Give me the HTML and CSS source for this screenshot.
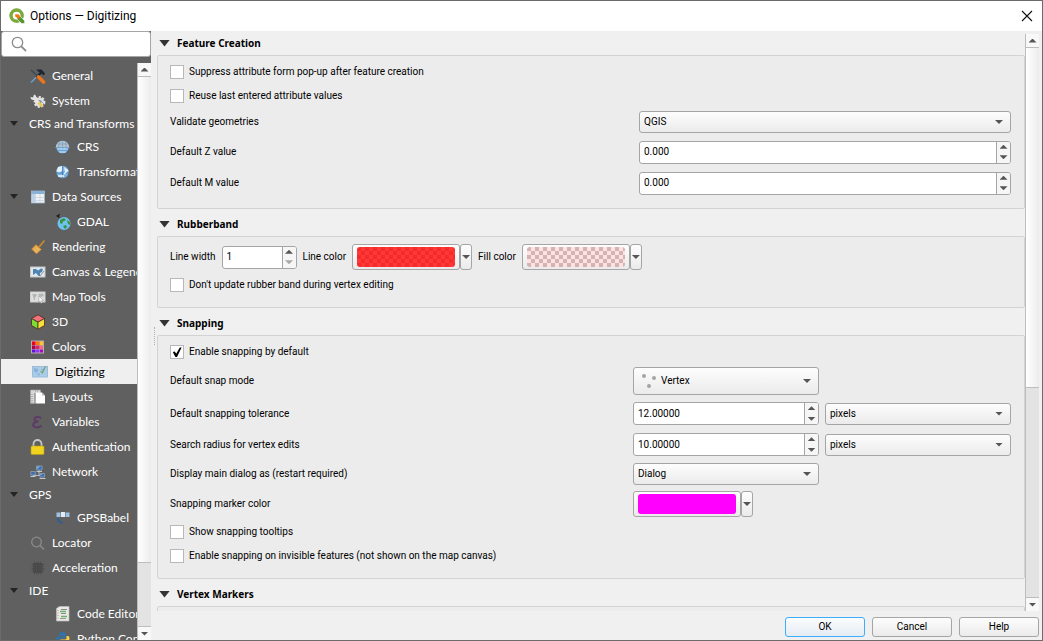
FILE: index.html
```html
<!DOCTYPE html>
<html lang="en">
<head>
<meta charset="utf-8">
<title>Options — Digitizing</title>
<link rel="stylesheet" href="styles.css">
</head>
<body>
<div class="window">
  <header class="titlebar">
    <svg class="icon" viewBox="0 0 16 16"><circle cx="7.6" cy="7.6" r="5.6" fill="none" stroke="#7aa93c" stroke-width="3.4"/><path d="M8 8h3l4.6 4.8v2.8h-3L8 11z" fill="#589632" stroke="#fff" stroke-width=".6"/><path d="M6.2 6.2h3.2l1.4 1.6v2.8H9L6.2 8.6z" fill="#ee7913"/></svg>
    <h1 class="title">Options — Digitizing</h1>
    <button class="close" aria-label="Close"><svg viewBox="0 0 12 12" width="12" height="12"><path d="M1 1l10 10M11 1L1 11" stroke="#111" stroke-width="1.1"/></svg></button>
  </header>
  <div class="body">
    <aside class="sidebar">
      <label class="search">
        <svg class="icon" viewBox="0 0 16 16" fill="none" stroke="#8c8c8c"><circle cx="6.5" cy="6.5" r="5.2" stroke-width="1.3"/><path d="M10.3 10.3L15 15" stroke-width="1.8"/></svg>
        <input type="text" aria-label="Search options">
      </label>
      <div class="tree-wrap">
        <nav class="tree">
          <button class="item"><svg class="icon" viewBox="0 0 16 16"><path d="M1 14.500l7-7" stroke="#6f9bc4" stroke-width="1.600"/><path d="M6.500 9.500l5-5.500" stroke="#1c2733" stroke-width="2.400"/><path d="M6.500 1.500h5l3.500 4-1.500 2-3-3-2.500-1z" fill="#1c2733"/><path d="M1 2l7 6.500" stroke="#3b4a5a" stroke-width="1.600"/><path d="M8.500 9l5 5" stroke="#f0741c" stroke-width="3.600" stroke-linecap="round"/></svg><span>General</span></button>
          <button class="item"><svg class="icon" viewBox="0 0 16 16"><circle cx="9.500" cy="9" r="4.600" fill="#ddd" stroke="#e2e2e2" stroke-width="2.600" stroke-dasharray="2 1.400"/><circle cx="9.500" cy="9" r="2" fill="#8a8a8a"/><path d="M.5 4l2.500.5L4 1.500c2 .5 2.500 2 2 3.500l4 4-2 2-4-4C2 7.500.5 6 .5 4z" fill="#e4e4e4"/><path d="M8.500 9.500l4 4" stroke="#ecc95a" stroke-width="2.600"/><path d="M10 7l4 4" stroke="#8bb0d6"/></svg><span>System</span></button>
          <button class="item plain"><i class="tri"></i><span>CRS and Transforms</span></button>
          <button class="item child"><svg class="icon" viewBox="0 0 16 16"><circle cx="7.500" cy="8" r="6.300" fill="#73b4ec"/><path d="M.8 8.500a6.700 6.700 0 0 1 13.400 0z" fill="#b4c2cc"/><path d="M0 8.500h15M2 5h11M2 11.500h11M7.500 1.500v13M4.700 2.200q-2 5.800 0 11.600M10.300 2.200q2 5.800 0 11.600" fill="none" stroke="#6e95bb" stroke-width=".6"/><path d="M2.500 10h10M4 13h7" stroke="#c7e4fc"/></svg><span>CRS</span></button>
          <button class="item child"><svg class="icon" viewBox="0 0 16 16"><circle cx="7.500" cy="8" r="6.200" fill="#78b4ea"/><path d="M3 3l4-1 1 4-4 3-2.500-2zM9 3l4 3-3 2z" fill="#e4f1fb"/><path d="M1 9h13M7.500 2v12" stroke="#4b76a5" stroke-width=".8"/><path d="M3 12h6M9 10l4-4" stroke="#eaf5ff" stroke-width="1.300"/></svg><span>Transformations</span></button>
          <button class="item"><i class="tri"></i><svg class="icon" viewBox="0 0 16 16"><rect x="1.500" y="2" width="13" height="12" fill="#eef2f5" stroke="#9fb4c7" stroke-width=".8"/><path d="M1.500 2h13v3h-13z" fill="#8ab2d8"/><path d="M5.500 5v9M10 5v9M1.500 8.500h13M1.500 11.500h13" stroke="#c6d2dc" stroke-width=".8"/><path d="M1.500 5h3.500v9H1.500z" fill="#bcd2e6"/></svg><span>Data Sources</span></button>
          <button class="item child"><svg class="icon" viewBox="0 0 16 16"><circle cx="9" cy="9.500" r="6.500" fill="#6cc3f0"/><path d="M5 6l4-2 2 2-3 1.500-1 2.500-2-1zM12 6l3 2v3l-2-1zM8 12l3-1 1 2-2 2z" fill="#3f8f3d"/><path d="M1.500 1.500l3 2M4.500 0L3 2.500" stroke="#17191b" stroke-width="1.300"/></svg><span>GDAL</span></button>
          <button class="item"><svg class="icon" viewBox="0 0 16 16"><path d="M9 8l5.500-6.500" stroke="#c98931" stroke-width="1.800"/><path d="M6 5.500l5.500 5-5 4.500L1.500 10z" fill="#e6ab50" stroke="#a8702a" stroke-width=".6"/><path d="M4 10.500l3 2.500M6 8.500l3 2.500" stroke="#f4cb83" stroke-width=".8"/></svg><span>Rendering</span></button>
          <button class="item"><svg class="icon" viewBox="0 0 16 16"><rect x=".5" y="3" width="14.500" height="10" fill="#e3e8ec" stroke="#c3c7cb"/><path d="M3 5l3 0 2 1.500 3-2 2 .5-1 3-2 1 0 3H8.500L6 9 3 11z" fill="#4f83b3"/><path d="M10 12l4-5" stroke="#8b959d"/></svg><span>Canvas &amp; Legend</span></button>
          <button class="item"><svg class="icon" viewBox="0 0 16 16"><rect x=".5" y="3" width="14.500" height="10" fill="#dedede" stroke="#cfcfcf"/><path d="M2 5l4 0 1 1.500-2 2 0 2.500-1 0-1-4zM8 5l5-.5 1 2.500-3 1-2-1z" fill="#b3b6b8"/><path d="M9 7l4.500 4.500-2 .3.800 2-1.300.5-.8-2-1.500 1z" fill="#f7f7f7" stroke="#8b8b8b" stroke-width=".5"/></svg><span>Map Tools</span></button>
          <button class="item"><svg class="icon" viewBox="0 0 16 16" stroke="#4a2b20" stroke-width=".8"><path d="M8 .8l6.500 3.700-6.500 3.700-6.500-3.700z" fill="#f2727a"/><path d="M1.500 4.500l6.500 3.700v7l-6.500-3.700z" fill="#7fdc32"/><path d="M14.500 4.500l-6.500 3.700v7l6.500-3.700z" fill="#f7df3c"/></svg><span>3D</span></button>
          <button class="item"><svg class="icon" viewBox="0 0 16 16"><path d="M1 1.500h13v13H1z" fill="#b9a9b1"/><path d="M2 2.500h3.500v3.500H2z" fill="#f00018"/><path d="M6 2.500h3.500v3.500H6z" fill="#fb7a10"/><path d="M10 2.500h3v3.500h-3z" fill="#fec818"/><path d="M2 6.500h3.500v3.500H2z" fill="#b00048"/><path d="M6 6.500h3.500v3.500H6z" fill="#e0226c"/><path d="M10 6.500h3v3.500h-3z" fill="#f46a80"/><path d="M2 10.500h3.500v3H2z" fill="#6412e0"/><path d="M6 10.500h3.500v3H6z" fill="#8f36f4"/><path d="M10 10.500h3v3h-3z" fill="#a808c0"/></svg><span>Colors</span></button>
          <button class="item selected" aria-current="page"><svg class="icon" viewBox="0 0 16 16"><rect x=".5" y="2.500" width="15" height="10.500" fill="#a9cce8" stroke="#9bbdda"/><path d="M2 4l4 1 0 2-2 2-2-2zM5 9l3 1-1 2zM9 5l3 0-1 3zM11 10l3 1" fill="#86b2d6"/><path d="M8 7l2.500 3L14.500 1.500l-2.500 2L10.500 7.500z" fill="#7ba368"/></svg><span>Digitizing</span></button>
          <button class="item"><svg class="icon" viewBox="0 0 16 16"><path d="M.5 1h10v3H4.500v10.500H.5z" fill="#d8d8d8" stroke="#a5a5a5" stroke-width=".6"/><path d="M2 5v9M5 2h4" stroke="#777" stroke-width=".7" stroke-dasharray="1"/><path d="M5.500 3.500h6.500l3 3v8H5.500z" fill="#fff"/><path d="M12 3.500v3h3z" fill="#bdbdbd"/></svg><span>Layouts</span></button>
          <button class="item"><svg class="icon" viewBox="0 0 16 16"><path d="M11 4.500Q9 2 6 3.200C3.300 4.500 4.500 7.500 8.500 7.500C3.500 7.500 2 11 4.500 12.800Q8 14.500 11.500 11.500" fill="none" stroke="#5f3a66" stroke-width="2"/></svg><span>Variables</span></button>
          <button class="item"><svg class="icon" viewBox="0 0 16 16"><path d="M3.500 8V5a4 4 0 0 1 8 0V8" fill="none" stroke="#c4c4c4" stroke-width="1.800"/><rect x="1" y="7" width="13" height="8.500" rx="1" fill="#f0d31e" stroke="#b89c10" stroke-width=".6"/></svg><span>Authentication</span></button>
          <button class="item"><svg class="icon" viewBox="0 0 16 16"><path d="M3 9v2.500h8M9 6v5.500" stroke="#b7bcc1" fill="none"/><path d="M6.500 2H12v4H6.500zM.8 7.500H5.300v3.500H.8zM10 9.500h4.500v3.500H10z" fill="#3a6fae" stroke="#93abc2" stroke-width=".7"/><path d="M7 2.500h3l-2.500 2.500zM10.500 10h2l-2 1.500z" fill="#8ab5e2"/><path d="M6.500 7.500h5.500M.5 12.500h5M9.500 14.500h6" stroke="#c5c8ca"/></svg><span>Network</span></button>
          <button class="item plain"><i class="tri"></i><span>GPS</span></button>
          <button class="item child"><svg class="icon" viewBox="0 0 16 16"><path d="M1.500 2.500h4v4.500h-4zM10.500 2.500h4v4.500h-4z" fill="#9fc0e2"/><path d="M6 2h4v5H6z" fill="#e1ecf6"/><path d="M1.500 8q0 4.500 6 6l1-2Q4.500 11 4 8z" fill="#385e8c"/></svg><span>GPSBabel</span></button>
          <button class="item"><svg class="icon" viewBox="0 0 16 16" fill="none" stroke="#8b8b8b"><circle cx="6.500" cy="7" r="4.800" stroke-width="1.300"/><path d="M10 10.500L14 14.500" stroke-width="1.600"/></svg><span>Locator</span></button>
          <button class="item"><svg class="icon" viewBox="0 0 16 16"><rect x="3" y="3" width="9.500" height="10" fill="#4a4a4a"/><path d="M4.500 1.500v13M6.500 1.500v13M8.500 1.500v13M10.500 1.500v13M1.500 4.500h13M1.500 6.500h13M1.500 8.500h13M1.500 10.500h13" stroke="#4b4b4b" stroke-width=".8"/></svg><span>Acceleration</span></button>
          <button class="item plain"><i class="tri"></i><span>IDE</span></button>
          <button class="item child"><svg class="icon" viewBox="0 0 16 16"><path d="M1.500 2.500l3-2H14v14.500H1.500z" fill="#e9e9e6" stroke="#bcbcb8" stroke-width=".7"/><path d="M6 3.500h6M6 7.500h5" stroke="#888"/><path d="M5 5.500h6M6 10.500h6" stroke="#6ab267" stroke-width="1.300"/><path d="M5 12.500h6" stroke="#999"/><path d="M3 4v9" stroke="#c88" stroke-dasharray="1 1.500"/></svg><span>Code Editor</span></button>
          <button class="item child"><svg class="icon" viewBox="0 0 16 16"><path d="M7.500 1C4 1 4 2.500 4 4v1h4v.8H2.500C.5 6 .5 11 2.500 11H4V9q0-1.500 1.500-1.500h4Q11 7.500 11 6V3.500C11 1.500 9.500 1 7.500 1z" fill="#3671a4"/><path d="M8 15c3.500 0 3.500-1.500 3.500-3v-1H7.500v-.8H13c2-.2 2-5 0-5.200h-1.500v2q0 1.500-1.500 1.500H6Q4.500 8.500 4.500 10v2.500C4.500 14.500 6 15 8 15z" fill="#ffd13f"/></svg><span>Python Console</span></button>
        </nav>
        <div class="scrollbar side-bar"><button class="step" aria-label="Scroll list up"><i class="up"></i></button><div class="track"><div class="handle"></div></div><button class="step" aria-label="Scroll list down"><i class="down"></i></button></div>
      </div>
    </aside>
    <div class="splitter"><i></i></div>
    <main class="main">
      <div class="scroll-area">
        <div class="content">
          <section>
            <h2 class="heading">Feature Creation</h2>
            <div class="group">
              <label class="check"><input type="checkbox">Suppress attribute form pop-up after feature creation</label>
              <label class="check"><input type="checkbox">Reuse last entered attribute values</label>
              <div class="grid creation">
                <label for="validate">Validate geometries</label>
                <div class="combo"><select id="validate"><option>QGIS</option></select></div>
                <label for="zval">Default Z value</label>
                <div class="spin"><input id="zval" type="text" value="0.000"><div class="steps"><button aria-label="Increase Z"><i class="up"></i></button><button aria-label="Decrease Z"><i class="down"></i></button></div></div>
                <label for="mval">Default M value</label>
                <div class="spin"><input id="mval" type="text" value="0.000"><div class="steps"><button aria-label="Increase M"><i class="up"></i></button><button aria-label="Decrease M"><i class="down"></i></button></div></div>
              </div>
            </div>
          </section>
          <section>
            <h2 class="heading">Rubberband</h2>
            <div class="group">
              <div class="band">
                <label for="lwidth">Line width</label>
                <div class="spin narrow"><input id="lwidth" type="text" value="1"><div class="steps"><button aria-label="Increase width"><i class="up"></i></button><button aria-label="Decrease width" disabled><i class="down"></i></button></div></div>
                <label for="lcolor">Line color</label>
                <div class="color"><button id="lcolor" class="well"><i class="swatch red"></i></button><button class="menu" aria-label="Line color menu"><i class="down"></i></button></div>
                <label for="fcolor">Fill color</label>
                <div class="color"><button id="fcolor" class="well"><i class="swatch pink"></i></button><button class="menu" aria-label="Fill color menu"><i class="down"></i></button></div>
              </div>
              <label class="check"><input type="checkbox">Don't update rubber band during vertex editing</label>
            </div>
          </section>
          <section>
            <h2 class="heading">Snapping</h2>
            <div class="group">
              <label class="check"><input type="checkbox" checked>Enable snapping by default</label>
              <div class="grid snapping">
                <label for="mode">Default snap mode</label>
                <div class="combo tall"><svg class="dots" viewBox="0 0 16 16" fill="#a5a5a5"><circle cx="3" cy="3" r="2"/><circle cx="13" cy="5" r="2"/><circle cx="8" cy="13" r="2"/></svg><select id="mode"><option>Vertex</option></select></div>
                <label class="first" for="tol">Default snapping tolerance</label>
                <div class="spin"><input id="tol" type="text" value="12.00000"><div class="steps"><button aria-label="Increase tolerance"><i class="up"></i></button><button aria-label="Decrease tolerance"><i class="down"></i></button></div></div>
                <div class="combo"><select aria-label="Tolerance units"><option>pixels</option></select></div>
                <label class="first" for="radius">Search radius for vertex edits</label>
                <div class="spin"><input id="radius" type="text" value="10.00000"><div class="steps"><button aria-label="Increase radius"><i class="up"></i></button><button aria-label="Decrease radius"><i class="down"></i></button></div></div>
                <div class="combo"><select aria-label="Radius units"><option>pixels</option></select></div>
                <label class="first" for="dialog">Display main dialog as (restart required)</label>
                <div class="combo"><select id="dialog"><option>Dialog</option></select></div>
                <label class="first" for="marker">Snapping marker color</label>
                <div class="color"><button id="marker" class="well"><i class="swatch magenta"></i></button><button class="menu" aria-label="Marker color menu"><i class="down"></i></button></div>
              </div>
              <label class="check"><input type="checkbox">Show snapping tooltips</label>
              <label class="check"><input type="checkbox">Enable snapping on invisible features (not shown on the map canvas)</label>
            </div>
          </section>
          <section>
            <h2 class="heading">Vertex Markers</h2>
            <div class="group"></div>
          </section>
        </div>
        <div class="scrollbar main-bar"><button class="step" aria-label="Scroll page up"><i class="up"></i></button><div class="track"><div class="handle"></div></div><button class="step" aria-label="Scroll page down"><i class="down"></i></button></div>
      </div>
      <footer class="footer">
        <button class="push default">OK</button>
        <button class="push">Cancel</button>
        <button class="push">Help</button>
      </footer>
    </main>
  </div>
</div>
</body>
</html>
```
FILE: styles.css
```css
* { box-sizing: border-box; }

body {
  margin: 0;
  font-family: Roboto, "Open Sans", sans-serif;
  font-size: 10px;
  line-height: 14px;
  color: #000;
}

button, input, select {
  font: inherit;
  color: inherit;
  margin: 0;
  padding: 0;
  border: 0;
  background: none;
  outline: 0;
}

.window {
  height: 100vh;
  display: flex;
  flex-direction: column;
  background: #f0f0f0;
  border: 1px solid #6b6b6b;
}

.icon { width: 16px; height: 16px; flex: none; }

/* Title bar */
.titlebar {
  flex: none;
  height: 30px;
  display: flex;
  align-items: center;
  gap: 5px;
  padding: 0 9px 0 8px;
  background: #fff;
}
.title { margin: 0; flex: 1; font-size: 12px; font-weight: 400; }
.close { display: flex; }

.body { flex: 1; min-height: 0; display: flex; }

/* Sidebar */
.sidebar {
  width: 150px;
  flex: none;
  display: flex;
  flex-direction: column;
  background: #606060;
}
.search {
  flex: none;
  height: 26px;
  display: flex;
  align-items: center;
  gap: 4px;
  padding: 0 4px 0 9px;
  background: #fff;
  border: 1px solid #a6a6a6;
  border-radius: 3px;
}
.search input { flex: 1; min-width: 0; }
.tree-wrap { flex: 1; min-height: 0; display: flex; padding-top: 6px; }
.tree { flex: 1; min-width: 0; overflow: hidden; font-family: Lato, "Open Sans", sans-serif; font-size: 12px; color: #fff; }
.item {
  position: relative;
  display: flex;
  align-items: center;
  gap: 6px;
  width: 100%;
  height: 25px;
  padding-left: 29px;
  white-space: nowrap;
  text-align: left;
}
.item.plain { height: 21px; padding-left: 28px; }
.item.child { padding-left: 54px; }
.item.selected { padding-left: 31px; background: #efefef; color: #000; gap: 7px; }
.tri {
  position: absolute;
  left: 9px;
  width: 8px;
  height: 5px;
  background: #242424;
  clip-path: polygon(0 0, 100% 0, 50% 100%);
}

/* Arrows */
.up, .down { display: block; width: 8px; height: 4px; background: #555; flex: none; }
.up { clip-path: polygon(50% 0, 100% 100%, 0 100%); }
.down { clip-path: polygon(0 0, 100% 0, 50% 100%); }
button:disabled .down { background: #a8a8a8; }

/* Scroll bars */
.scrollbar { width: 14px; flex: none; display: flex; flex-direction: column; border-left: 1px solid #bdbdbd; }
.step { height: 13px; flex: none; display: flex; align-items: center; justify-content: center; background: #f8f8f8; }
.track { flex: 1; background: #e3e3e3; }
.handle { border: solid #bdbdbd; border-width: 1px 0; background: linear-gradient(90deg, #fff, #ececec); }
.side-bar .handle { height: 88.5%; }
.main-bar .handle { height: 62%; }
.step:last-child { height: 14px; border-top: 1px solid #bdbdbd; }

.splitter { width: 6px; flex: none; display: flex; align-items: center; justify-content: center; }
.splitter i { height: 18px; border-left: 1px dotted #b0b0b0; }

/* Main column */
.main { flex: 1; min-width: 0; display: flex; flex-direction: column; padding-right: 3px; }
.scroll-area { flex: 1; min-height: 0; display: flex; }
.content { flex: 1; min-width: 0; overflow: hidden; }
.main-bar { margin-top: 3px; }

.heading {
  display: flex;
  align-items: center;
  gap: 7px;
  height: 24px;
  margin: 0;
  padding-left: 2px;
  font-family: "Noto Sans", "Open Sans", sans-serif;
  font-size: 10px;
  font-weight: 700;
}
section + section { padding-top: 3px; }
.heading::before {
  content: "";
  width: 11px;
  height: 7px;
  background: #333;
  clip-path: polygon(0 0, 100% 0, 50% 100%);
}
.group {
  min-height: 40px;
  padding: 4px 13px 10px 12px;
  background: #ececec;
  border: 1px solid #d3d3d3;
  border-radius: 2px;
}

.check { display: flex; align-items: center; gap: 5px; height: 24px; }
.check input {
  appearance: none;
  width: 14px;
  height: 14px;
  display: grid;
  place-items: center;
  background: #fff;
  border: 1px solid #b8b8b8;
}
.check input:checked::before {
  content: "";
  width: 10px;
  height: 10px;
  background: #000;
  clip-path: polygon(8% 50%, 28% 45%, 42% 68%, 78% 4%, 96% 4%, 50% 100%, 34% 100%);
}

.grid { display: grid; align-items: center; }
.creation { grid-template-columns: 469fr 372fr; grid-template-rows: 28px 32px 30px; }
.snapping {
  grid-template-columns: 457fr 186fr 186fr;
  grid-template-rows: 34px 31px 31px 28px 32px;
  column-gap: 6px;
}
.first { grid-column: 1; }

.combo, .spin, .well, .menu, .push {
  border: 1px solid #a5a5a5;
  border-radius: 3px;
  background: linear-gradient(#fdfdfd, #ebebeb);
}
.combo { position: relative; display: flex; align-items: center; height: 22px; }
.combo select { appearance: none; flex: 1; min-width: 0; height: 100%; padding: 0 20px 0 4px; }
.combo::after {
  content: "";
  position: absolute;
  right: 7px;
  width: 8px;
  height: 4px;
  background: #555;
  clip-path: polygon(0 0, 100% 0, 50% 100%);
  pointer-events: none;
}
.combo.tall { height: 28px; }
.dots { width: 16px; height: 16px; margin-left: 7px; flex: none; }

.spin { display: flex; height: 23px; background: #fff; overflow: hidden; }
.spin input { flex: 1; min-width: 0; padding-left: 4px; }
.steps { width: 14px; display: flex; flex-direction: column; border-left: 1px solid #a5a5a5; background: #f6f6f6; }
.steps button { flex: 1; display: flex; align-items: center; justify-content: center; }
.narrow { width: 75px; }

.band { display: flex; align-items: center; gap: 6px; height: 32px; }
.color { display: flex; }
.well { width: 108px; height: 26px; padding: 2px 4px; }
.menu { width: 12px; height: 26px; display: flex; align-items: center; justify-content: center; }
.swatch { display: block; height: 20px; border-radius: 3px; }
.red { background: repeating-conic-gradient(#ff3838 0 25%, #f52b2b 0 50%) 0 0 / 8px 8px; }
.pink { background: repeating-conic-gradient(#ffe1e1 0 25%, #d3b4b4 0 50%) 0 0 / 8px 8px; }
.magenta { background: #f0f; }

.footer { flex: none; display: flex; justify-content: flex-end; gap: 7px; padding: 6px 0 3px; }
.push { width: 80px; height: 20px; }
.push.default { border-color: #3daeff; background: linear-gradient(#fbfcfd, #e4ecf3); }
```
